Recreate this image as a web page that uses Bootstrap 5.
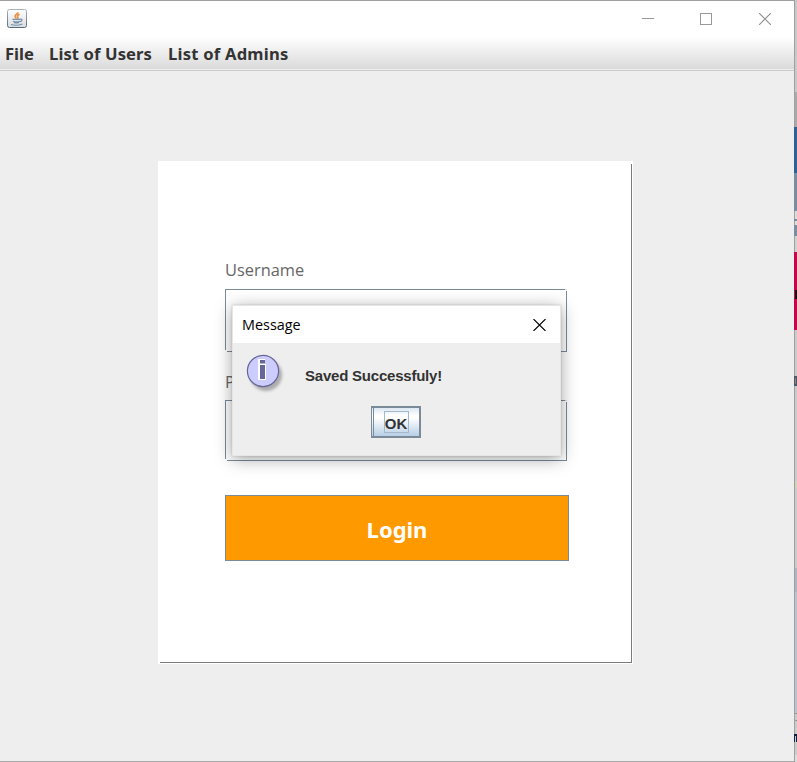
<!DOCTYPE html>
<html lang="en">
<head>
<meta charset="utf-8">
<meta name="viewport" content="width=device-width, initial-scale=1">
<title>Login</title>
<link href="https://cdn.jsdelivr.net/npm/bootstrap@5.3.0/dist/css/bootstrap.min.css" rel="stylesheet">
<style>
body{width:797px;height:762px;overflow:hidden;font-family:"Open Sans","Noto Sans",sans-serif;background:#ccc;color:#333}
.app-window{width:795px;height:762px;border-top:1px solid #a0a0a0;border-right:1px solid #a0a0a0;border-bottom:1px solid #a9a9a9;background:#eee}
.title-bar{height:36px;padding-left:7px;background:#fff}
.win-controls{padding-right:23px;gap:47px}
.win-min{margin-right:-1px}
.menu-strip{height:34px;padding:1px 0 0 5px;background:linear-gradient(#fff,#dadada) 0 0/100% 32px no-repeat,#eee;border-bottom:1px solid #ccc;font:700 16.6px/32px "Noto Sans",sans-serif}
.menu-strip a{color:#333;text-decoration:none;white-space:nowrap;letter-spacing:.22px}
.menu-strip .m-file{width:44px;letter-spacing:0}.menu-strip .m-users{width:119px;letter-spacing:.1px}
.login-panel{width:475px;height:503px;margin:90px 0 0 158px;padding:97px 64px 0 67px;background:linear-gradient(#7b7b7b,#7b7b7b) 473px 3px/1px 499px no-repeat,linear-gradient(#7b7b7b,#7b7b7b) 2px 501px/472px 1px no-repeat,#fff}
.field-label{height:31px;font:400 16.4px/23px "Open Sans",sans-serif;color:#666}
.field-label-pass{height:30px}
.field-box{width:342px;border:1px solid #7a8a99;background:#fff;border-radius:0;padding:0;position:relative}
.field-box::before,.field-box::after{content:"";position:absolute;width:2px;height:2px;background:#fff}
.field-box::before{right:-1px;top:-1px;border-top:1px solid #ddd}
.field-box::after{left:-1px;bottom:-1px}
.f-user{height:63px;margin-bottom:18px}.f-pass{height:61px;margin-bottom:34px}
.login-btn{width:344px;height:66px;border:1px solid #7a8a99;border-radius:0;background:#f90;color:#fff;font:700 22px/30px "Noto Sans",sans-serif;padding:1px 0 0;letter-spacing:0}
.login-btn:hover{background:#f90;color:#fff}
.msg-dialog{left:232px;top:305px;width:329px;height:151px;background:#eee;box-shadow:0 3px 16px rgba(0,0,0,.36),0 0 2px rgba(0,0,0,.16);border:1px solid #e6e6e6}
.msg-title{height:37px;padding:0 14px 0 9px;background:#fff;color:#000;font:400 14.4px/37px "Open Sans",sans-serif}
.msg-body{padding:11px 0 0 13px;height:63px}
.msg-text{margin:12px 0 0 20px;font:700 15px/20px "Liberation Sans",sans-serif;white-space:nowrap;letter-spacing:-.22px}
.ok-btn{width:50px;height:32px;border:2px solid #7a8a99;border-left:1px solid #7a8a99;border-radius:0;padding:0 0 0 1px;background:linear-gradient(#7a8a99,#7a8a99) 1px 0/1px 100% no-repeat,linear-gradient(#dde8f3,#fff 28%,#fff 35%,#b8cfe5);margin-left:138px}
.ok-btn span{width:25px;height:22px;border:1px solid #a3b8cc;font:700 15px/23px "Liberation Sans",sans-serif;color:#333}
.desk-edge{left:794px;top:0}
</style>
</head>
<body class="position-relative">
<main class="app-window d-flex flex-column">
  <header class="title-bar d-flex align-items-center justify-content-between">
    <svg width="20" height="20" viewBox="0 0 20 20"><defs><linearGradient id="ib" x2="0" y2="1"><stop stop-color="#fff"/><stop offset="1" stop-color="#d9dcdf"/></linearGradient><linearGradient id="ie" x2="0" y2="1"><stop stop-color="#a9b4bd"/><stop offset="1" stop-color="#536b7c"/></linearGradient></defs><rect x=".5" y=".5" width="19" height="18" rx="2" fill="url(#ib)" stroke="url(#ie)"/><path d="M10.800 3.200c.5 2-3.300 2.500-2.700 4.400.2.8 1.200 1.200 1 2M12.500 5.200c-1.500.8-2.700 1.800-1.800 2.800.5.700.3 1.200-.2 1.700" fill="none" stroke="#ec8a36" stroke-width="1.600"/><path d="M5.500 10.300h8M6 12.200c2 .8 5 .8 7 0M6.800 13.500c1.700.6 3.800.6 5.400 0M13.300 10.300c2.400-.7 2.400 1.800-.2 2.400M4 15.500c3 1.100 9 1 11.500-.4" fill="none" stroke="#7791a8" stroke-width="1.200"/></svg>
    <div class="win-controls d-flex align-items-center">
      <svg class="win-min" width="12" height="12" shape-rendering="crispEdges"><path d="M0 5.500h12" stroke="#999"/></svg>
      <svg width="12" height="12" shape-rendering="crispEdges"><rect x=".5" y=".5" width="11" height="11" fill="none" stroke="#999"/></svg>
      <svg width="12" height="12"><path d="M0 0l12 12M12 0L0 12" stroke="#8d8d8d" stroke-width="1.100"/></svg>
    </div>
  </header>
  <nav class="menu-strip d-flex">
    <a class="m-file" href="#">File</a><a class="m-users" href="#">List of Users</a><a href="#">List of Admins</a>
  </nav>
  <form class="login-panel">
    <label class="field-label d-block" for="u">Username</label>
    <div class="field-box f-user" id="u"></div>
    <label class="field-label field-label-pass d-block" for="p">Password</label>
    <div class="field-box f-pass" id="p"></div>
    <button type="button" class="btn login-btn d-block">Login</button>
  </form>
</main>
<svg class="desk-edge position-absolute" width="3" height="762" shape-rendering="crispEdges">
  <path fill="#c9c9c9" d="M1 0h2v92h-2z"/><path fill="#aaa" d="M1 92h2v35h-2z"/>
  <path fill="#2f6195" d="M0 127h3v46h-3z"/><path fill="#7a8ea3" d="M0 173h3v38h-3zM0 219h3v2h-3zM0 225h3v11h-3z"/>
  <path fill="#ddd" d="M1 211h2v8h-2zM1 221h2v4h-2z"/><path fill="#ced3d1" d="M1 236h2v16h-2z"/>
  <path fill="#c4044b" d="M0 252h3v78h-3z"/><path fill="#111" d="M1 290h2v9h-2z"/>
  <path fill="#cbcbcb" d="M1 330h2v238h-2z"/><path fill="#4c596c" d="M0 376h3v10h-3z"/><path fill="#9b806b" d="M1 378h1v6h-1z"/>
  <path fill="#d2d2bb" d="M1 481h2v7h-2z"/><path fill="#adb5c0" d="M1 568h2v24h-2z"/><path fill="#bdc5cc" d="M1 592h2v121h-2z"/>
  <path fill="#999" d="M1 713h2v1h-2zM1 720h2v1h-2z"/><path fill="#102040" d="M0 734h3v2h-3zM0 734h1v8h-1zM2 734h1v8h-1z"/><path fill="#ddd" d="M1 755h2v7h-2z"/>
</svg>
<section class="msg-dialog position-absolute" role="dialog" aria-label="Message">
  <div class="msg-title d-flex align-items-center justify-content-between"><span>Message</span>
    <svg width="13" height="12"><path d="M.5 0l12 12M12.500 0l-12 12" stroke="#000" stroke-width="1.100"/></svg>
  </div>
  <div class="msg-body d-flex">
    <svg width="39" height="40" viewBox="0 0 39 40"><defs><filter id="sh" x="-.3" y="-.3" width="1.6" height="1.6"><feGaussianBlur stdDeviation="1.4"/></filter></defs><circle cx="20" cy="21" r="16" fill="#777" opacity=".55" filter="url(#sh)"/><circle cx="17" cy="17" r="15.600" fill="#ccf" stroke="#669" stroke-width="1.200"/><path d="M12 5h7v6h-7zM12 10h8v16h-8z" fill="#fff"/><path d="M14 6h5v3.500h-5zM14 11h5v14h-5z" fill="#669"/></svg>
    <div class="msg-text">Saved Successfuly!</div>
  </div>
  <button type="button" class="btn ok-btn d-flex align-items-center justify-content-center"><span class="d-block">OK</span></button>
</section>
<script src="https://cdn.jsdelivr.net/npm/bootstrap@5.3.0/dist/js/bootstrap.bundle.min.js"></script>
</body>
</html>
